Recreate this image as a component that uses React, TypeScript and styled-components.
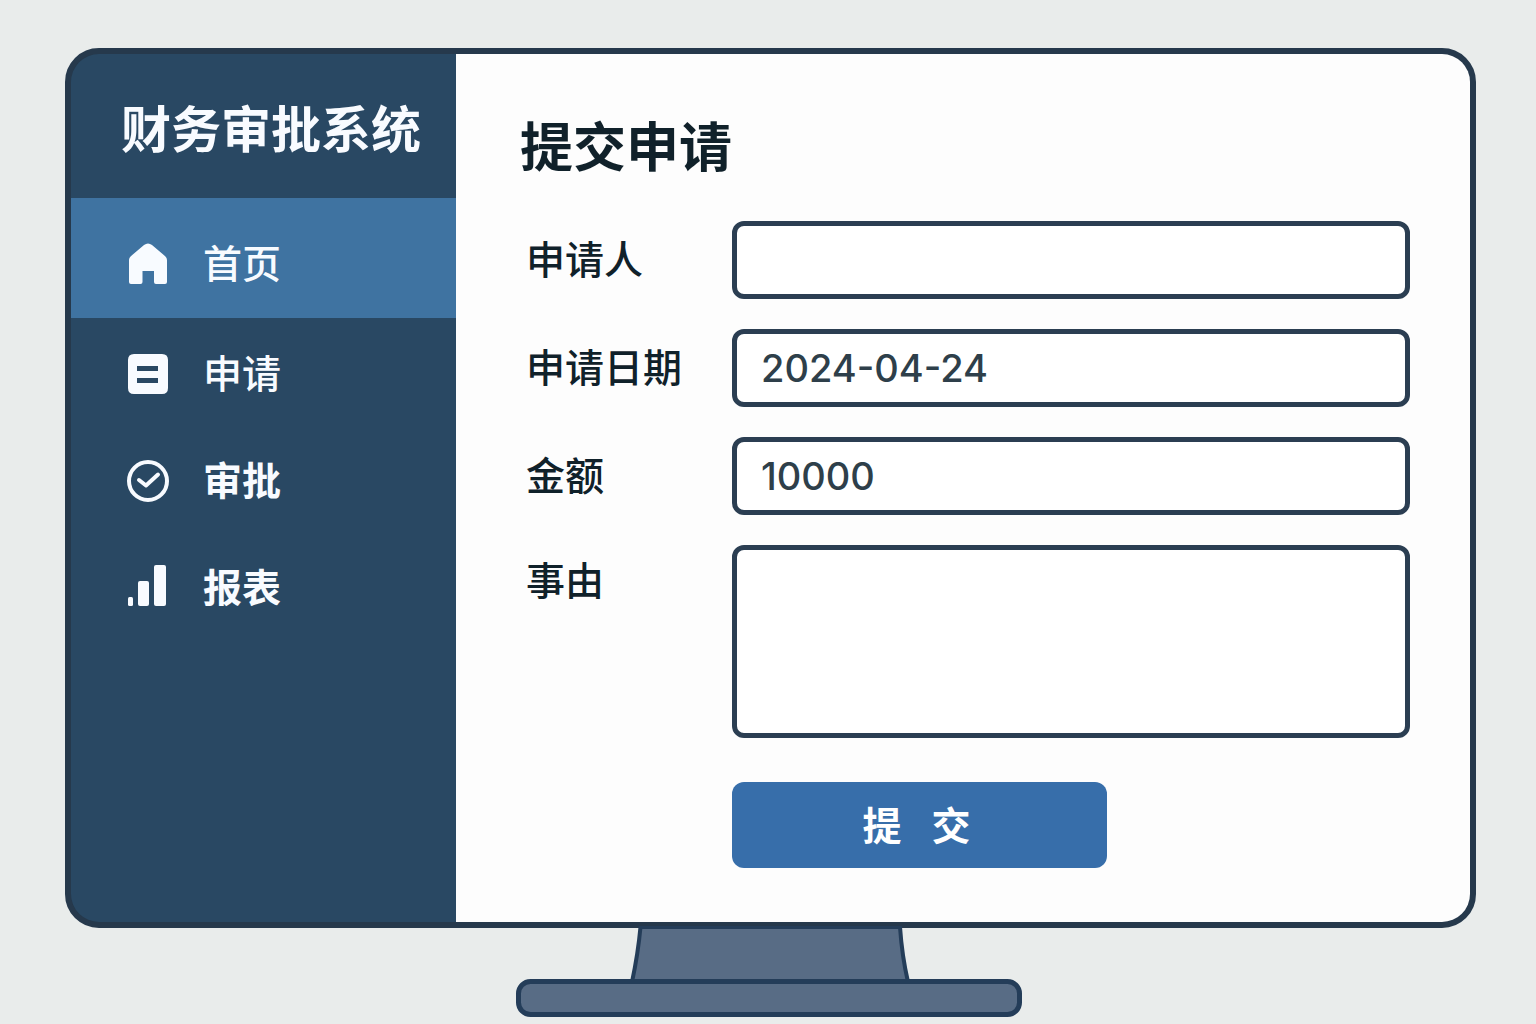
import React, { useState } from "react";
import styled, { createGlobalStyle } from "styled-components";

const color = {
  page: "#e9eceb",
  frame: "#26394c",
  sidebar: "#294863",
  active: "#3f73a1",
  panel: "#fdfdfd",
  line: "#2b3e52",
  ink: "#10212a",
  value: "#2e3f4a",
  primary: "#376eaa",
  stand: "#586c85",
  standLine: "#243d59",
  light: "#f8fbff",
};

const GlobalStyle = createGlobalStyle`
  *, *::before, *::after { box-sizing: border-box; }
  body {
    margin: 0;
    background: ${color.page};
    font-family: "Noto Sans CJK SC", "Noto Sans", sans-serif;
  }
`;

const Page = styled.div`
  display: flex;
  flex-direction: column;
  min-height: 100vh;
  padding: 48px 60px 0 65px;
`;

const Screen = styled.div`
  display: flex;
  border: 6px solid ${color.frame};
  border-radius: 34px;
  background: ${color.frame};
  overflow: hidden;
`;

const Sidebar = styled.aside`
  flex: 0 0 385px;
  background: ${color.sidebar};
  color: ${color.light};
`;

const Brand = styled.div`
  padding: 42px 0 42px 50px;
  font-size: 50px;
  font-weight: 700;
  line-height: 60px;
  white-space: nowrap;
`;

const NavList = styled.ul`
  margin: 0;
  padding: 0;
  list-style: none;
`;

const NavLink = styled.a<{ $active?: boolean; $strong?: boolean }>`
  display: flex;
  align-items: center;
  gap: 34px;
  height: ${(p) => (p.$active ? 120 : 107)}px;
  margin-bottom: ${(p) => (p.$active ? 2 : 0)}px;
  padding: ${(p) => (p.$active ? 12 : 0)}px 0 0 56px;
  background: ${(p) => (p.$active ? color.active : "transparent")};
  color: inherit;
  font-size: 39px;
  font-weight: ${(p) => (p.$strong ? 700 : 500)};
  line-height: 48px;
  text-decoration: none;
`;

const NavText = styled.span`
  padding-bottom: 6px;
`;

const NavIcon = styled.svg`
  flex: none;
  width: 42px;
  height: 42px;
  overflow: visible;
`;

const Main = styled.main`
  flex: 1;
  min-width: 0;
  padding: 60px 60px 54px 64px;
  background: ${color.panel};
`;

const Title = styled.h1`
  margin: 0 0 47px;
  color: ${color.ink};
  font-size: 53px;
  font-weight: 700;
  line-height: 60px;
`;

const Form = styled.form`
  display: flex;
  flex-direction: column;
  gap: 30px;
`;

const Field = styled.div`
  display: grid;
  grid-template-columns: 212px minmax(0, 1fr);
  align-items: start;
`;

const Label = styled.label<{ $line?: number }>`
  padding-left: 6px;
  color: ${color.ink};
  font-size: 39px;
  font-weight: 500;
  line-height: ${(p) => p.$line ?? 72}px;
`;

const Input = styled.input`
  width: 100%;
  height: 78px;
  padding: 0 24px;
  border: 5px solid ${color.line};
  border-radius: 12px;
  background: #fff;
  color: ${color.value};
  font-family: Inter, "Noto Sans", sans-serif;
  font-size: 38px;
  font-weight: 500;
`;

const TextArea = styled(Input).attrs({ as: "textarea" })`
  display: block;
  height: 193px;
  padding: 12px 24px;
  resize: none;
`;

const Actions = styled.div`
  padding: 14px 0 0 212px;
`;

const Submit = styled.button`
  display: flex;
  align-items: center;
  justify-content: center;
  gap: 30px;
  width: 375px;
  height: 86px;
  padding: 0 6px 4px 0;
  border: 0;
  border-radius: 12px;
  background: ${color.primary};
  color: #fff;
  font: inherit;
  font-size: 39px;
  font-weight: 700;
  cursor: pointer;
`;

const Stand = styled.svg`
  display: block;
  align-self: center;
  width: 506px;
  height: 91px;
  margin: -2px 4px 0 0;
`;

const HomeIcon = () => (
  <NavIcon viewBox="0 0 42 42" aria-hidden="true">
    <path
      fill="currentColor"
      d="M17 2Q21 -1 25 2L38.200 13.200Q40 14.800 40 17V39Q40 41 38 41H29Q27 41 27 39V28H15.500V39Q15.500 41 13.500 41H4Q2 41 2 39V17Q2 14.800 3.800 13.200Z"
    />
  </NavIcon>
);

const FormIcon = () => (
  <NavIcon viewBox="0 0 42 42" aria-hidden="true">
    <path
      fill="currentColor"
      fillRule="evenodd"
      d="M7 1H35Q41 1 41 7V35Q41 41 35 41H7Q1 41 1 35V7Q1 1 7 1ZM10 13V18H31V13ZM10 25V30H31V25Z"
    />
  </NavIcon>
);

const CheckIcon = () => (
  <NavIcon viewBox="0 0 42 42" aria-hidden="true" fill="none" stroke="currentColor" strokeWidth="4">
    <circle cx="21" cy="21" r="19" />
    <path d="M12 20L19 25.500L31 14.500" strokeLinecap="round" strokeLinejoin="round" />
  </NavIcon>
);

const ChartIcon = () => (
  <NavIcon viewBox="0 0 42 42" aria-hidden="true" fill="currentColor">
    <rect x="1" y="30" width="5" height="9" rx="1.500" />
    <rect x="11" y="14" width="11" height="25" rx="2" />
    <rect x="27" y="-2" width="12" height="41" rx="2" />
  </NavIcon>
);

const navItems = [
  { label: "首页", Icon: HomeIcon, active: true },
  { label: "申请", Icon: FormIcon },
  { label: "审批", Icon: CheckIcon, strong: true },
  { label: "报表", Icon: ChartIcon, strong: true },
];

export default function App() {
  const [form, setForm] = useState({ name: "", date: "2024-04-24", amount: "10000", reason: "" });
  const update =
    (key: keyof typeof form) => (e: React.ChangeEvent<HTMLInputElement | HTMLTextAreaElement>) =>
      setForm({ ...form, [key]: e.target.value });

  return (
    <Page>
      <GlobalStyle />
      <Screen>
        <Sidebar>
          <Brand>财务审批系统</Brand>
          <nav>
            <NavList>
              {navItems.map(({ label, Icon, active, strong }) => (
                <li key={label}>
                  <NavLink href="#" $active={active} $strong={strong} aria-current={active ? "page" : undefined}>
                    <Icon />
                    <NavText>{label}</NavText>
                  </NavLink>
                </li>
              ))}
            </NavList>
          </nav>
        </Sidebar>
        <Main>
          <Title>提交申请</Title>
          <Form onSubmit={(e) => e.preventDefault()}>
            <Field>
              <Label htmlFor="name">申请人</Label>
              <Input id="name" value={form.name} onChange={update("name")} />
            </Field>
            <Field>
              <Label htmlFor="date">申请日期</Label>
              <Input id="date" value={form.date} onChange={update("date")} />
            </Field>
            <Field>
              <Label htmlFor="amount">金额</Label>
              <Input id="amount" inputMode="numeric" value={form.amount} onChange={update("amount")} />
            </Field>
            <Field>
              <Label htmlFor="reason" $line={66}>
                事由
              </Label>
              <TextArea id="reason" value={form.reason} onChange={update("reason")} />
            </Field>
            <Actions>
              <Submit type="submit">
                <span>提</span>
                <span>交</span>
              </Submit>
            </Actions>
          </Form>
        </Main>
      </Screen>
      <Stand viewBox="0 0 506 91" aria-hidden="true" fill={color.stand} stroke={color.standLine}>
        <path d="M124.500 1Q122 28 116 56H392Q386 30 384 1Z" strokeWidth="4" />
        <rect x="2.500" y="55.500" width="501" height="33" rx="12" strokeWidth="5" />
      </Stand>
    </Page>
  );
}
